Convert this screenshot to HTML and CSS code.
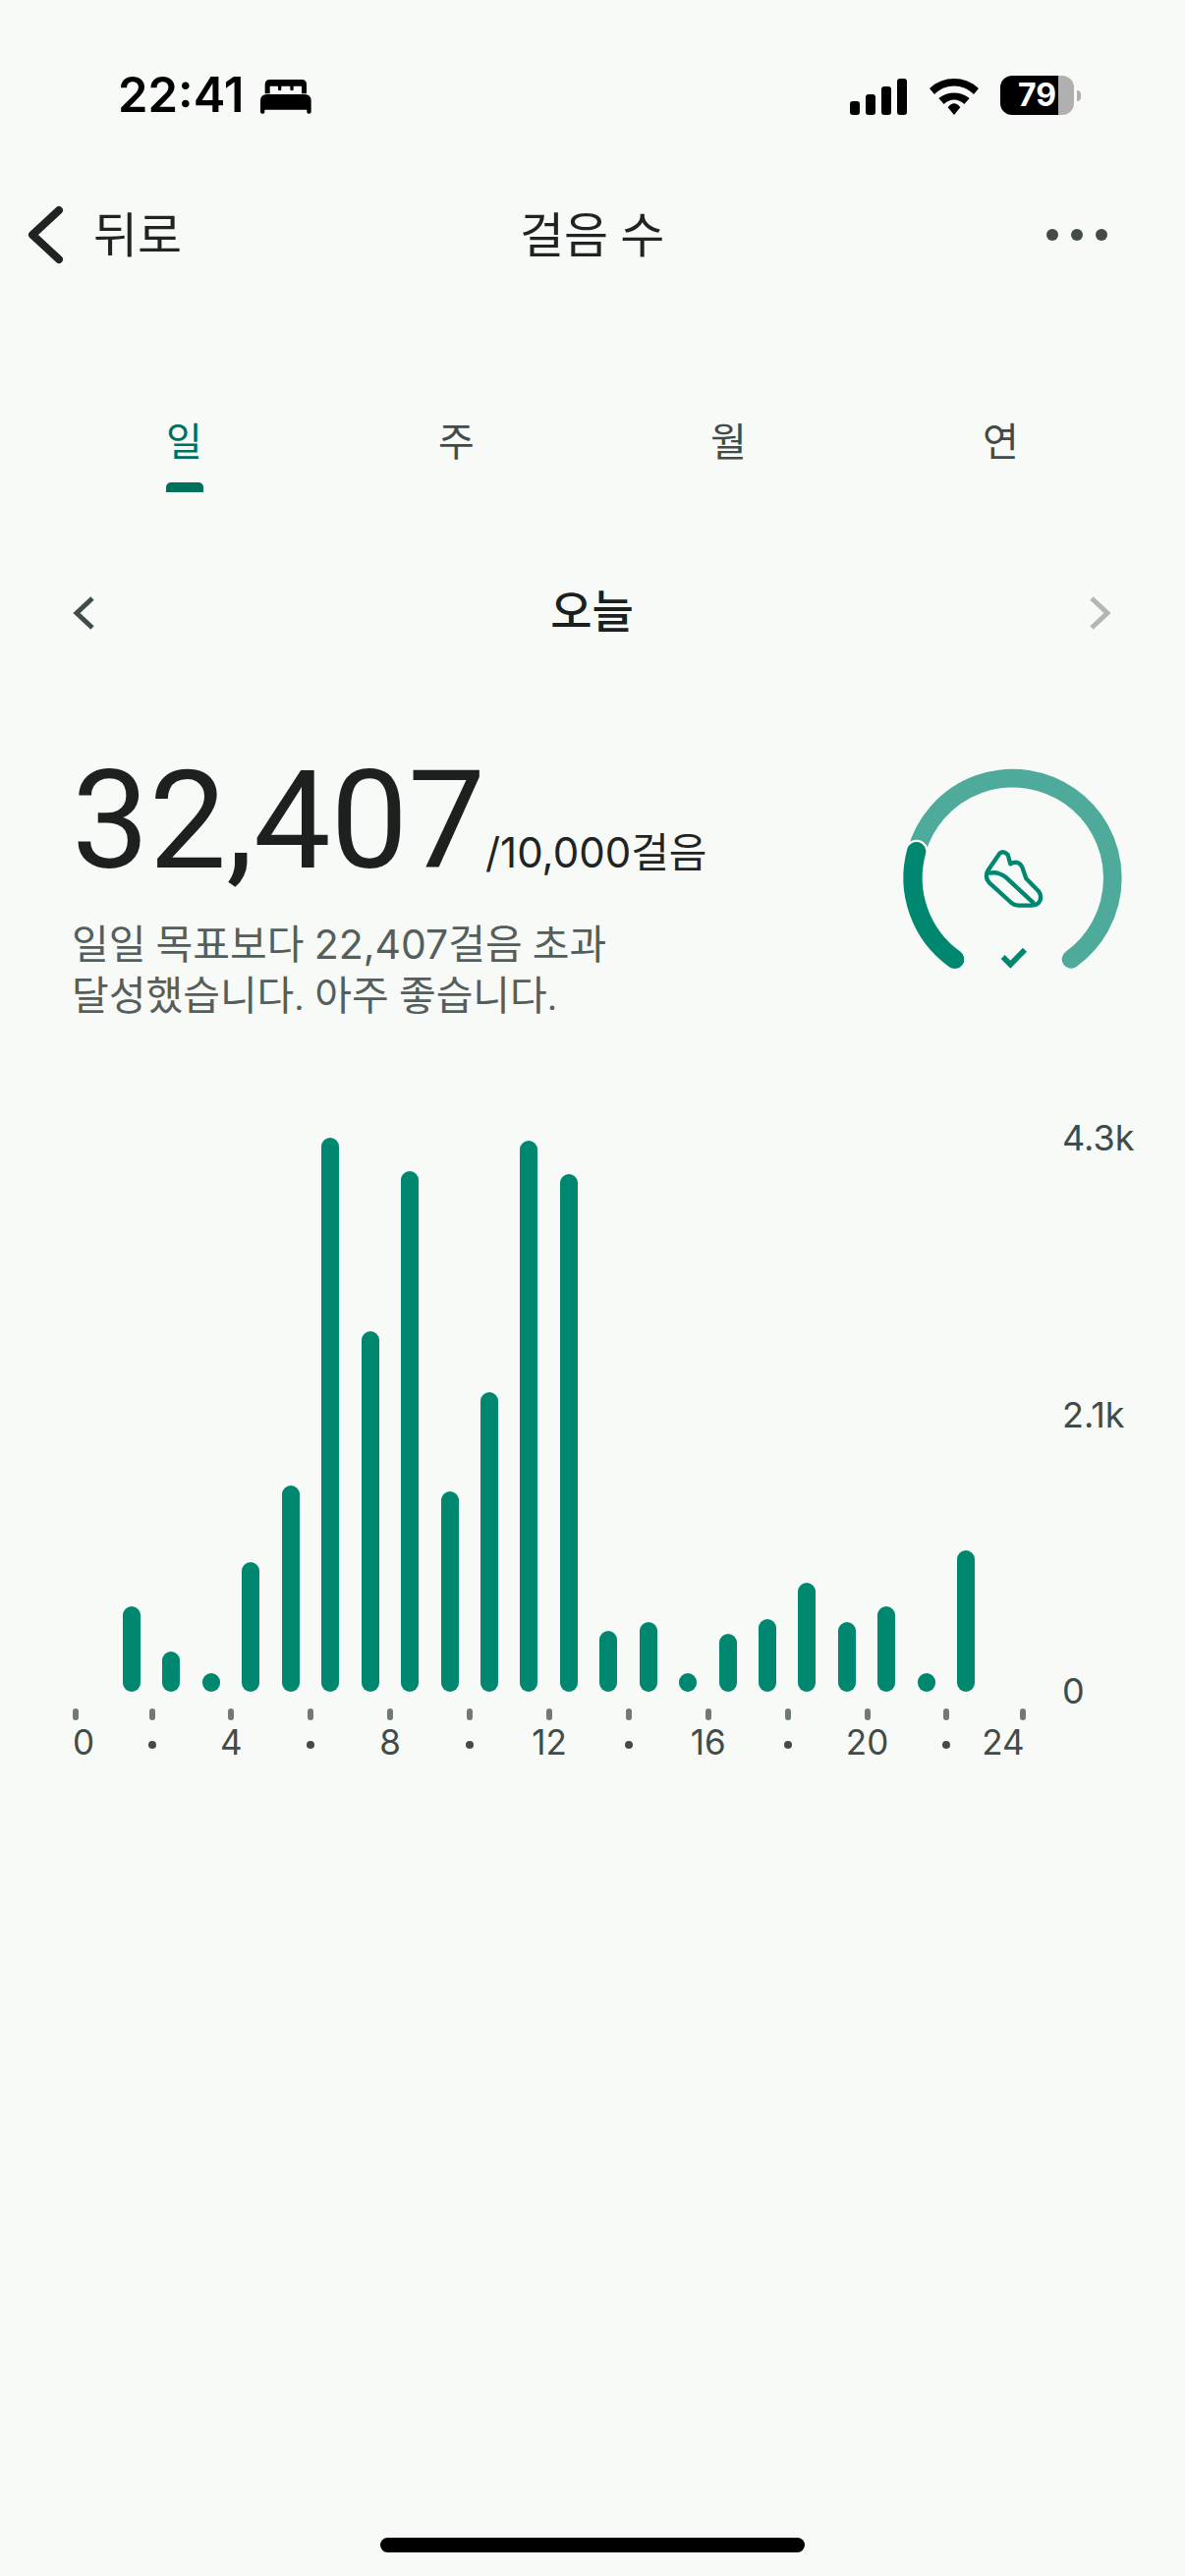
FILE: index.html
```html
<!DOCTYPE html>
<html lang="ko">
<head>
    <meta charset="UTF-8">
    <meta name="viewport" content="width=device-width, initial-scale=1.0">
    <title>걸음 수</title>
    <link rel="stylesheet" href="styles.css">
</head>
<body>
    <div class="page">
        <div class="status-bar">
            <div class="status-left">
                <span class="clock">22:41</span>
                <svg class="bed-icon" viewBox="500 60 156 108">
                    <path d="M514 106V78Q514 63 530 63H626Q641 63 641 78V106H626V83H601V92Q601 97 596 97Q591 97 591 92V83H564V92Q564 97 559 97Q554 97 554 92V83H529V106Z"/>
                    <path d="M520 108H635Q655 108 655 128V162Q655 167 649 167H647Q642 167 642 162V155H513V162Q513 167 508 167H506Q500 167 500 162V128Q500 108 520 108Z"/>
                </svg>
            </div>
            <div class="status-right">
                <div class="signal">
                    <span class="signal-1"></span>
                    <span class="signal-2"></span>
                    <span class="signal-3"></span>
                    <span class="signal-4"></span>
                </div>
                <svg class="wifi-icon" viewBox="0 0 150 111">
                    <path d="M0 30C42 -10 108 -10 150 30L135 48C100 14 50 14 15 48Z"/>
                    <path d="M28 60C58 38 92 38 122 60L106 78C88 60 62 60 44 78Z"/>
                    <path d="M56 88C68 72 82 72 94 88L75 111Z"/>
                </svg>
                <div class="battery">79</div>
                <span class="battery-nub"></span>
            </div>
        </div>

        <div class="nav">
            <div class="nav-back">
                <svg class="back-icon" viewBox="0 0 40 60">
                    <path d="M33 5L6 30L33 55"/>
                </svg>
                <span class="nav-text">뒤로</span>
            </div>
            <div class="nav-text">걸음 수</div>
            <div class="nav-more">
                <span></span><span></span><span></span>
            </div>
        </div>

        <div class="tabs">
            <div class="tab active">일<span class="tab-line"></span></div>
            <div class="tab">주</div>
            <div class="tab">월</div>
            <div class="tab">연</div>
        </div>

        <div class="date-row">
            <svg class="date-arrow" viewBox="0 0 22 34"><path d="M20 2L4 17L20 32"/></svg>
            <div class="date-label">오늘</div>
            <svg class="date-arrow disabled" viewBox="0 0 22 34"><path d="M2 2L18 17L2 32"/></svg>
        </div>

        <div class="summary">
            <div class="summary-text">
                <div class="total">
                    <span class="total-value">32,407</span>
                    <span class="total-goal">/10,000걸음</span>
                </div>
                <p class="summary-note">일일 목표보다 <span class="note-num">22,407</span>걸음 초과<br>달성했습니다. 아주 좋습니다.</p>
            </div>
            <svg class="gauge" viewBox="0 0 900 840">
                <path class="gauge-track" d="M218 380A305 305 0 1 1 690 709"/>
                <path class="gauge-gap" d="M250 600A305 305 0 0 1 218 380"/>
                <path class="gauge-value" d="M335 709A305 305 0 0 1 218 380"/>
                <path class="gauge-shoe" d="M472 386Q484 376 497 390L505 418Q530 405 541 428L553 463L590 500Q605 520 590 538Q582 545 570 545H530Q518 545 508 537L440 475Q425 458 437 437Z"/>
                <path class="gauge-shoe" d="M440 446Q470 441 490 458L574 536"/>
                <path class="gauge-check" d="M482 702L505 725L549 680"/>
            </svg>
        </div>

        <div class="chart">
            <div class="chart-main">
                <div class="bars">
                    <div class="bar" style="height:87px"></div>
                    <div class="bar" style="height:41px"></div>
                    <div class="bar" style="height:19px"></div>
                    <div class="bar" style="height:132px"></div>
                    <div class="bar" style="height:210px"></div>
                    <div class="bar" style="height:564px"></div>
                    <div class="bar" style="height:367px"></div>
                    <div class="bar" style="height:530px"></div>
                    <div class="bar" style="height:204px"></div>
                    <div class="bar" style="height:305px"></div>
                    <div class="bar" style="height:561px"></div>
                    <div class="bar" style="height:527px"></div>
                    <div class="bar" style="height:62px"></div>
                    <div class="bar" style="height:71px"></div>
                    <div class="bar" style="height:19px"></div>
                    <div class="bar" style="height:59px"></div>
                    <div class="bar" style="height:74px"></div>
                    <div class="bar" style="height:111px"></div>
                    <div class="bar" style="height:71px"></div>
                    <div class="bar" style="height:87px"></div>
                    <div class="bar" style="height:19px"></div>
                    <div class="bar" style="height:144px"></div>
                </div>
                <div class="axis">
                    <div class="slot"><span class="tick"></span><span class="hour hour-first">0</span></div>
                    <div class="slot"><span class="tick"></span><span class="dot"></span></div>
                    <div class="slot"><span class="tick"></span><span class="hour">4</span></div>
                    <div class="slot"><span class="tick"></span><span class="dot"></span></div>
                    <div class="slot"><span class="tick"></span><span class="hour">8</span></div>
                    <div class="slot"><span class="tick"></span><span class="dot"></span></div>
                    <div class="slot"><span class="tick"></span><span class="hour">12</span></div>
                    <div class="slot"><span class="tick"></span><span class="dot"></span></div>
                    <div class="slot"><span class="tick"></span><span class="hour">16</span></div>
                    <div class="slot"><span class="tick"></span><span class="dot"></span></div>
                    <div class="slot"><span class="tick"></span><span class="hour">20</span></div>
                    <div class="slot"><span class="tick"></span><span class="dot"></span></div>
                    <div class="slot"><span class="tick"></span><span class="hour hour-last">24</span></div>
                </div>
            </div>
            <div class="y-axis">
                <span>4.3k</span>
                <span>2.1k</span>
                <span>0</span>
            </div>
        </div>

        <div class="home-bar"></div>
    </div>
</body>
</html>
```
FILE: styles.css
```css
body {
    margin: 0;
    background-color: #f8faf8;
    font-family: Roboto, "Noto Sans CJK KR", sans-serif;
    color: #1c201e;
}

.page {
    display: flex;
    flex-direction: column;
    height: 2622px;
    padding-top: 70px;
    box-sizing: border-box;
    overflow: hidden;
}

/* status bar */
.status-bar {
    display: flex;
    justify-content: space-between;
    align-items: center;
    height: 54px;
    padding: 0 106px 0 120px;
}

.status-left, .status-right {
    display: flex;
    align-items: center;
}

.clock {
    font-family: Inter, sans-serif;
    font-weight: 600;
    font-size: 49px;
    line-height: 54px;
    color: #000;
}

.bed-icon {
    width: 52px;
    height: 36px;
    margin-left: 17px;
    margin-top: 2px;
}

.signal {
    display: flex;
    align-items: flex-end;
    gap: 5.5px;
    height: 37px;
    margin-top: 2px;
}

.signal span {
    width: 10.5px;
    background-color: #000;
    border-radius: 3px;
}

.signal-1 { height: 14px; }
.signal-2 { height: 21px; }
.signal-3 { height: 29px; }
.signal-4 { height: 37px; }

.wifi-icon {
    width: 50px;
    height: 37px;
    margin-left: 23px;
    margin-top: 2px;
}

.battery {
    width: 75px;
    height: 40px;
    margin-left: 22px;
    padding-left: 18px;
    box-sizing: border-box;
    border-radius: 12px;
    background: linear-gradient(90deg, #000 79%, #b0b1ae 79%);
    color: #fff;
    font-family: Inter, sans-serif;
    font-weight: 700;
    font-size: 32px;
    line-height: 40px;
}

.battery-nub {
    width: 4px;
    height: 11px;
    margin-left: 3px;
    background-color: #b0b1ae;
    border-radius: 0 4px 4px 0;
}

/* nav */
.nav {
    display: grid;
    grid-template-columns: 502px 150px 1fr;
    align-items: center;
    height: 72px;
    margin-top: 76px;
    padding: 0 79px 0 27px;
    font-size: 49px;
    color: #1f2422;
}

.nav-text {
    margin-bottom: 7px;
    white-space: nowrap;
}

.nav-back {
    display: flex;
    align-items: center;
    gap: 28px;
}

.back-icon {
    width: 40px;
    height: 60px;
}

.back-icon path {
    fill: none;
    stroke: #1f2422;
    stroke-width: 8;
    stroke-linecap: round;
    stroke-linejoin: round;
}

.nav-more {
    display: flex;
    justify-content: flex-end;
    gap: 13px;
}

.nav-more span {
    width: 12px;
    height: 12px;
    border-radius: 50%;
    background-color: #414b48;
}

/* tabs */
.tabs {
    display: grid;
    grid-template-columns: repeat(4, 277px);
    height: 81px;
    margin-top: 148px;
    padding-left: 49px;
}

.tab {
    display: flex;
    flex-direction: column;
    align-items: center;
    padding-top: 1px;
    font-size: 40px;
    line-height: 60px;
    color: #414b48;
}

.tab.active {
    color: #00705e;
}

.tab-line {
    width: 38px;
    height: 10px;
    margin-top: 10px;
    background-color: #00705e;
    border-radius: 5px 5px 0 0;
}

/* date */
.date-row {
    display: flex;
    justify-content: space-between;
    align-items: center;
    height: 60px;
    margin-top: 91px;
    padding: 0 75px 0 74px;
}

.date-label {
    margin-bottom: 7px;
    font-size: 46px;
    font-weight: 500;
    color: #1b1f1d;
}

.date-arrow {
    width: 22px;
    height: 34px;
    margin-top: 3px;
}

.date-arrow path {
    fill: none;
    stroke: #414b48;
    stroke-width: 5;
}

.date-arrow.disabled path {
    stroke: #b4b6b4;
}

/* summary */
.summary {
    display: flex;
    justify-content: space-between;
    margin-top: 88px;
    padding: 0 46px 0 73px;
}

.total {
    display: flex;
    align-items: baseline;
    margin-top: 26px;
}

.total-value {
    font-size: 140px;
    line-height: 138px;
    color: #1c201e;
}

.total-goal {
    font-family: Inter, "Noto Sans CJK KR", sans-serif;
    font-size: 42px;
    color: #1f2422;
}

.summary-note {
    margin: 31px 0 0;
    font-size: 41px;
    line-height: 52px;
    color: #545f5c;
}

.note-num {
    font-family: Inter, sans-serif;
}

.gauge {
    width: 300px;
    height: 280px;
}

.gauge path {
    fill: none;
}

.gauge-track {
    stroke: #4eab9b;
    stroke-width: 56;
    stroke-linecap: round;
}

.gauge-gap {
    stroke: #f8faf8;
    stroke-width: 72;
    stroke-linecap: round;
}

.gauge-value {
    stroke: #008770;
    stroke-width: 58;
    stroke-linecap: round;
}

.gauge .gauge-shoe {
    stroke: #008770;
    stroke-width: 13;
    stroke-linejoin: round;
    stroke-linecap: round;
}

.gauge .gauge-check {
    stroke: #008770;
    stroke-width: 17;
}

/* chart */
.chart {
    display: flex;
    margin-top: 118px;
    font-family: Inter, sans-serif;
}

.chart-main {
    width: 1081px;
}

.bars {
    display: flex;
    align-items: flex-end;
    gap: 22.45px;
    height: 564px;
    padding-left: 125px;
}

.bar {
    width: 18px;
    background-color: #008770;
    border-radius: 9px;
}

.axis {
    display: grid;
    grid-template-columns: 77.5px repeat(10, 80.9px) 77.5px 0;
    margin-top: 17px;
    padding-left: 77px;
}

.slot {
    display: flex;
    flex-direction: column;
    align-items: center;
    width: 0;
}

.tick {
    flex: none;
    width: 6px;
    height: 12px;
    background-color: #6f7a76;
    border-radius: 3px;
}

.hour {
    font-size: 35px;
    line-height: 44px;
    color: #414b48;
}

.hour-first {
    margin-left: 16px;
}

.hour-last {
    margin-right: 40px;
}

.dot {
    flex: none;
    width: 8px;
    height: 8px;
    margin-top: 21px;
    background-color: #414b48;
    border-radius: 50%;
}

.y-axis {
    display: flex;
    flex-direction: column;
    justify-content: space-between;
    height: 607px;
    margin-top: -22px;
    font-size: 36px;
    line-height: 44px;
    color: #414b48;
}

/* home indicator */
.home-bar {
    width: 432px;
    height: 15px;
    margin: auto auto 24px;
    background-color: #000;
    border-radius: 8px;
}
```
